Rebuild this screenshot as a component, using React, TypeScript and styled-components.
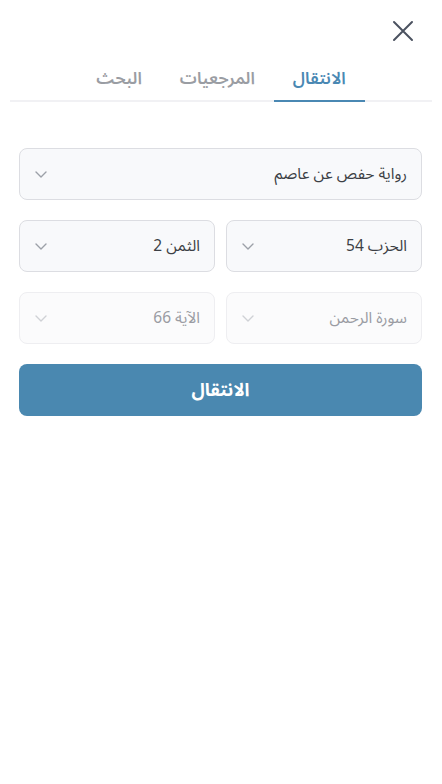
import React from 'react'
import styled, { createGlobalStyle } from 'styled-components'

const GlobalStyle = createGlobalStyle`
  html, body {
    margin: 0;
    padding: 0;
    background: #ffffff;
  }
  body {
    font-family: "Noto Sans Arabic", "Noto Sans", "DejaVu Sans", sans-serif;
  }
`

const Panel = styled.div`
  direction: rtl;
  width: 442px;
  min-height: 784px;
  box-sizing: border-box;
  padding: 0 10px;
  background: #fff;
`

const TopBar = styled.div`
  display: flex;
  justify-content: flex-start;
  padding: 16px 14px 0 0;
  height: 42px;
`

const CloseButton = styled.button`
  width: 30px;
  height: 30px;
  border: 0;
  background: none;
  padding: 0;
  cursor: pointer;
  display: flex;
  align-items: center;
  justify-content: center;
`

const Tabs = styled.div`
  display: flex;
  justify-content: center;
  border-bottom: 2px solid #f1f1f4;
`

const Tab = styled.div<{ $active?: boolean }>`
  padding: 7px 19px 7px;
  font-size: 17px;
  font-weight: 600;
  color: ${p => (p.$active ? '#4a88b3' : '#9a9da3')};
  border-bottom: 2px solid ${p => (p.$active ? '#4a88b3' : 'transparent')};
  margin-bottom: -2px;
  line-height: 28px;
`

const Form = styled.div`
  display: flex;
  flex-direction: column;
  gap: 20px;
  padding: 46px 10px 0 9px;
`

const Row = styled.div`
  display: grid;
  grid-template-columns: 1fr 1fr;
  gap: 11px;
`

const Select = styled.div<{ $disabled?: boolean }>`
  height: 52px;
  box-sizing: border-box;
  border: 1px solid ${p => (p.$disabled ? '#eeeef1' : '#dcdde2')};
  border-radius: 8px;
  background: ${p => (p.$disabled ? '#fbfbfc' : '#f8f9fb')};
  display: flex;
  align-items: center;
  justify-content: space-between;
  padding: 0 14px;
  font-size: 15.5px;
  color: ${p => (p.$disabled ? '#9a9ca3' : '#3c3f45')};
`

const Chevron = styled.svg<{ $disabled?: boolean }>`
  width: 14px;
  height: 14px;
  color: ${p => (p.$disabled ? '#cfd1d6' : '#9ca0a8')};
`

const GoButton = styled.button`
  height: 52px;
  border: 0;
  border-radius: 8px;
  background: #4a88b0;
  color: #fff;
  font-family: inherit;
  font-size: 18px;
  font-weight: 700;
  cursor: pointer;
`

const ChevronIcon = ({ disabled }: { disabled?: boolean }) => (
  <Chevron $disabled={disabled} viewBox="0 0 14 14" fill="none">
    <path d="M2 5l5 5 5-5" stroke="currentColor" strokeWidth="1.4" strokeLinecap="round" strokeLinejoin="round" />
  </Chevron>
)

const Field = ({ label, disabled }: { label: string; disabled?: boolean }) => (
  <Select $disabled={disabled}>
    <span>{label}</span>
    <ChevronIcon disabled={disabled} />
  </Select>
)

const App = () => {
  return (
    <>
      <GlobalStyle />
      <Panel>
        <TopBar>
          <CloseButton aria-label="إغلاق">
            <svg width="24" height="24" viewBox="0 0 24 24" fill="none">
              <path d="M3 3l18 18M21 3L3 21" stroke="#4b5260" strokeWidth="2" strokeLinecap="round" />
            </svg>
          </CloseButton>
        </TopBar>
        <Tabs>
          <Tab $active>الانتقال</Tab>
          <Tab>المرجعيات</Tab>
          <Tab>البحث</Tab>
        </Tabs>
        <Form>
          <Field label="رواية حفص عن عاصم" />
          <Row>
            <Field label="الحزب 54" />
            <Field label="الثمن 2" />
          </Row>
          <Row>
            <Field label="سورة الرحمن" disabled />
            <Field label="الآية 66" disabled />
          </Row>
          <GoButton>الانتقال</GoButton>
        </Form>
      </Panel>
    </>
  )
}

export default App
